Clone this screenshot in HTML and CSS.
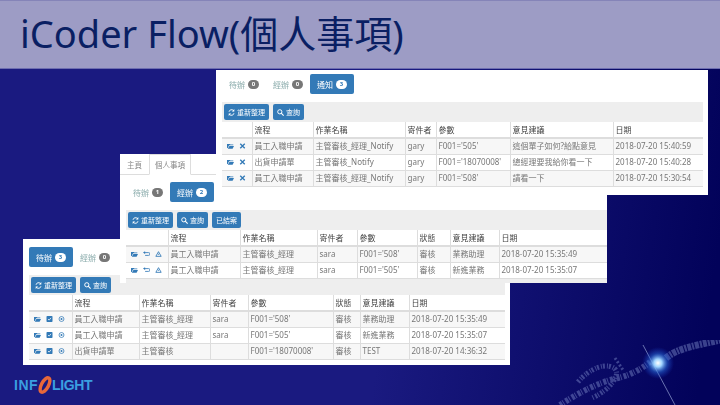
FILE: index.html
```html
<!DOCTYPE html>
<html lang="zh-Hant">
<head>
    <meta charset="UTF-8">
    <meta name="viewport" content="width=device-width, initial-scale=1.0">
    <title>iCoder Flow</title>
    <link rel="stylesheet" href="styles.css">
</head>
<body>

<svg width="0" height="0" class="defs">
    <symbol id="folder" viewBox="0 0 10 8"><path d="M0 1h4l1 1h4v1H3L1 7H0zM3.500 4H10L8 8H1z" fill="#337ab7"/></symbol>
    <symbol id="cross" viewBox="0 0 8 8"><path d="M1 1l6 6M7 1L1 7" stroke="#337ab7" stroke-width="1.800"/></symbol>
    <symbol id="undo" viewBox="0 0 10 8"><path d="M2 2h6a1.500 1.500 0 0 1 0 4H3" fill="none" stroke="#337ab7" stroke-width="1.200"/><path d="M0 2l3-2v4z" fill="#337ab7"/></symbol>
    <symbol id="warn" viewBox="0 0 10 9"><path d="M5 1l4 7H1z" fill="none" stroke="#337ab7" stroke-width="1.300"/><path d="M5 4v2" stroke="#337ab7"/></symbol>
    <symbol id="check" viewBox="0 0 8 8"><rect width="8" height="8" rx="1" fill="#337ab7"/><path d="M2 4l1.500 1.500L6 2.500" fill="none" stroke="#fff"/></symbol>
    <symbol id="ring" viewBox="0 0 8 8"><circle cx="4" cy="4" r="3.300" fill="none" stroke="#337ab7"/><circle cx="4" cy="4" r="1.300" fill="#337ab7"/></symbol>
    <symbol id="sync" viewBox="0 0 10 10"><path d="M1.500 4a3.600 3.600 0 0 1 6.500-1.500M8.500 6A3.600 3.600 0 0 1 2 7.500" fill="none" stroke="#fff" stroke-width="1.300"/><path d="M9 0v3.500H5.500zM1 10V6.500h3.500z" fill="#fff"/></symbol>
    <symbol id="search" viewBox="0 0 10 10"><circle cx="4" cy="4" r="3" fill="none" stroke="#fff" stroke-width="1.400"/><path d="M6 6l3.500 3.500" stroke="#fff" stroke-width="1.600"/></symbol>
    <radialGradient id="glow">
        <stop offset="0" stop-color="#fff"/>
        <stop offset="0.25" stop-color="#9fd4ff"/>
        <stop offset="0.6" stop-color="#2a6fe0" stop-opacity="0.5"/>
        <stop offset="1" stop-color="#1a3fd0" stop-opacity="0"/>
    </radialGradient>
</svg>

<header class="title-bar">
    <h1>iCoder Flow(個人事項)</h1>
</header>

<!-- chain and spark, bottom right of the slide -->
<svg class="spark" viewBox="0 0 240 65">
    <g class="chain" fill="none" stroke="#8f9fd8" opacity="0.4">
        <path d="M80 65C95 55 118 42 138 38C150 35 160 30 170 22" stroke-width="6" stroke-dasharray="3 1 1 2"/>
        <path d="M98 42C108 30 124 22 134 28C142 34 130 50 112 58" stroke-width="5" stroke-dasharray="2 2 1 1"/>
        <path d="M135 18l8 12" stroke-width="3" stroke-dasharray="2 2"/>
        <path d="M186 18C198 8 214 6 240 0" stroke-width="7" stroke-dasharray="4 1 2 1"/>
    </g>
    <path d="M163 5L195 65" stroke="#b8c8f0" stroke-width="0.800" opacity="0.7"/>
    <circle cx="178" cy="23" r="16" fill="url(#glow)"/>
</svg>

<section class="shot shot-three">
    <nav class="pills">
        <span class="pill active">待辦 <b>3</b></span>
        <span class="pill">經辦 <b>0</b></span>
    </nav>
    <div class="toolbar">
        <button class="btn"><svg><use href="#sync"/></svg>重新整理</button>
        <button class="btn"><svg><use href="#search"/></svg>查詢</button>
    </div>
    <table>
        <thead>
            <tr><th></th><th>流程</th><th>作業名稱</th><th>寄件者</th><th>參數</th><th>狀態</th><th>意見建議</th><th>日期</th></tr>
        </thead>
        <tbody>
            <tr>
                <td class="acts"><svg><use href="#folder"/></svg><svg><use href="#check"/></svg><svg><use href="#ring"/></svg></td>
                <td>員工入職申請</td><td>主管審核_經理</td><td>sara</td><td>F001='508'</td><td>審核</td><td>業務助理</td><td>2018-07-20 15:35:49</td>
            </tr>
            <tr>
                <td class="acts"><svg><use href="#folder"/></svg><svg><use href="#check"/></svg><svg><use href="#ring"/></svg></td>
                <td>員工入職申請</td><td>主管審核_經理</td><td>sara</td><td>F001='505'</td><td>審核</td><td>新進業務</td><td>2018-07-20 15:35:07</td>
            </tr>
            <tr>
                <td class="acts"><svg><use href="#folder"/></svg><svg><use href="#check"/></svg><svg><use href="#ring"/></svg></td>
                <td>出貨申請單</td><td>主管審核</td><td></td><td>F001='18070008'</td><td>審核</td><td>TEST</td><td>2018-07-20 14:36:32</td>
            </tr>
        </tbody>
    </table>
</section>

<section class="shot shot-two">
    <nav class="tabs">
        <span class="tab">主頁</span>
        <span class="tab open">個人事項</span>
    </nav>
    <nav class="pills">
        <span class="pill">待辦 <b>1</b></span>
        <span class="pill active">經辦 <b>2</b></span>
    </nav>
    <div class="toolbar">
        <button class="btn"><svg><use href="#sync"/></svg>重新整理</button>
        <button class="btn"><svg><use href="#search"/></svg>查詢</button>
        <button class="btn">已結案</button>
    </div>
    <table>
        <thead>
            <tr><th></th><th>流程</th><th>作業名稱</th><th>寄件者</th><th>參數</th><th>狀態</th><th>意見建議</th><th>日期</th></tr>
        </thead>
        <tbody>
            <tr>
                <td class="acts"><svg><use href="#folder"/></svg><svg><use href="#undo"/></svg><svg><use href="#warn"/></svg></td>
                <td>員工入職申請</td><td>主管審核_經理</td><td>sara</td><td>F001='508'</td><td>審核</td><td>業務助理</td><td>2018-07-20 15:35:49</td>
            </tr>
            <tr>
                <td class="acts"><svg><use href="#folder"/></svg><svg><use href="#undo"/></svg><svg><use href="#warn"/></svg></td>
                <td>員工入職申請</td><td>主管審核_經理</td><td>sara</td><td>F001='505'</td><td>審核</td><td>新進業務</td><td>2018-07-20 15:35:07</td>
            </tr>
        </tbody>
    </table>
    <div class="band"></div>
</section>

<section class="shot shot-one">
    <nav class="pills">
        <span class="pill">待辦 <b>0</b></span>
        <span class="pill">經辦 <b>0</b></span>
        <span class="pill active">通知 <b>3</b></span>
    </nav>
    <div class="toolbar">
        <button class="btn"><svg><use href="#sync"/></svg>重新整理</button>
        <button class="btn"><svg><use href="#search"/></svg>查詢</button>
    </div>
    <table>
        <thead>
            <tr><th></th><th>流程</th><th>作業名稱</th><th>寄件者</th><th>參數</th><th>意見建議</th><th>日期</th></tr>
        </thead>
        <tbody>
            <tr>
                <td class="acts"><svg><use href="#folder"/></svg><svg><use href="#cross"/></svg></td>
                <td>員工入職申請</td><td>主管審核_經理_Notify</td><td>gary</td><td>F001='505'</td><td>這個單子如何?給點意見</td><td>2018-07-20 15:40:59</td>
            </tr>
            <tr>
                <td class="acts"><svg><use href="#folder"/></svg><svg><use href="#cross"/></svg></td>
                <td>出貨申請單</td><td>主管審核_Notify</td><td>gary</td><td>F001='18070008'</td><td>總經理要我給你看一下</td><td>2018-07-20 15:40:28</td>
            </tr>
            <tr>
                <td class="acts"><svg><use href="#folder"/></svg><svg><use href="#cross"/></svg></td>
                <td>員工入職申請</td><td>主管審核_經理_Notify</td><td>gary</td><td>F001='508'</td><td>請看一下</td><td>2018-07-20 15:30:54</td>
            </tr>
        </tbody>
    </table>
    <div class="stub"><i></i><i></i></div>
</section>

<div class="logo">
    <span>INF</span>
    <svg class="logo-o" viewBox="0 0 14 20">
        <ellipse cx="7" cy="10" rx="3.500" ry="8" transform="rotate(28 7 10)" fill="none" stroke="#e8683a" stroke-width="3.400"/>
    </svg>
    <span class="logo-end">LIGHT</span>
</div>

</body>
</html>
```

FILE: styles.css
```css
* {
    margin: 0;
    padding: 0;
    box-sizing: border-box;
}

body {
    width: 720px;
    height: 405px;
    overflow: hidden;
    position: relative;
    font-family: "Noto Sans", "Noto Sans CJK TC", sans-serif;
    background: linear-gradient(98deg, #1a1a80 0%, #1a1a80 55%, #02025a 97%);
}

.defs {
    position: absolute;
}

.title-bar {
    height: 69px;
    padding: 7px 0 0 20px;
    background: #9d9cc5;
    border-top: 1px solid #8584b8;
    border-bottom: 1px solid #6d6db0;
}

.title-bar h1 {
    font-size: 38px;
    line-height: 50px;
    font-weight: 400;
    color: #0a1f63;
}

.spark {
    position: absolute;
    left: 480px;
    top: 340px;
    width: 240px;
    height: 65px;
}

.chain {
    filter: blur(0.6px);
}

/* screenshots lying on the slide */
.shot {
    position: absolute;
    background: #fff;
    font-size: 8px;
    color: #777;
    overflow: hidden;
}

.shot > * {
    filter: blur(0.35px);
}

.shot-one {
    left: 216px;
    top: 70px;
    width: 492px;
    height: 125px;
    padding: 4px 5px 0 6px;
    z-index: 3;
}

.shot-two {
    left: 120px;
    top: 154px;
    width: 487px;
    height: 129px;
    padding: 0 0 0 6px;
    z-index: 2;
}

.shot-three {
    left: 23px;
    top: 239px;
    width: 487px;
    height: 126px;
    padding: 8px 5px 0 6px;
    z-index: 1;
}

.tabs {
    display: flex;
    height: 21px;
    border-bottom: 1px solid #ddd;
    margin-left: -6px;
}

.tab {
    padding: 5px 7px 0;
    font-size: 7.500px;
    color: #888;
}

.tab.open {
    border: 1px solid #ddd;
    border-bottom: 1px solid #fff;
    height: 21px;
    padding: 4px 5px 0;
}

.pills {
    display: flex;
    height: 20px;
}

.shot-two .pills {
    margin-top: 7px;
}

.pill {
    display: flex;
    align-items: center;
    gap: 3px;
    padding: 0 7px;
    border-radius: 2px;
    color: #8aa;
}

.pill b {
    display: inline-block;
    width: 11px;
    height: 9px;
    border-radius: 5px;
    background: #777;
    color: #fff;
    font-size: 6px;
    line-height: 9px;
    text-align: center;
}

.pill.active {
    background: #337ab7;
    color: #fff;
}

.pill.active b {
    background: #fff;
    color: #337ab7;
}

.toolbar {
    display: flex;
    align-items: center;
    gap: 4px;
    height: 20px;
    margin-top: 8px;
    padding-left: 2px;
    background: #eee;
}

.btn {
    display: flex;
    align-items: center;
    gap: 2px;
    height: 16px;
    padding: 0 4px;
    border: none;
    border-radius: 2px;
    background: #337ab7;
    color: #fff;
    font-size: 7px;
    font-family: inherit;
}

.btn svg {
    width: 7px;
    height: 7px;
}

table {
    width: 100%;
    table-layout: fixed;
    border-collapse: collapse;
    background: #fff;
}

th, td {
    height: 16px;
    padding: 0 2px;
    font-size: 8px;
    line-height: 10px;
    font-weight: 400;
    text-align: left;
    white-space: nowrap;
    overflow: hidden;
    border-left: 1px solid #ddd;
    border-bottom: 1px solid #ddd;
}

th {
    color: #444;
    border-bottom-width: 2px;
}

th:first-child, td:first-child {
    border-left: none;
}

tbody tr:nth-child(odd) {
    background: #f7f7f7;
}

.acts {
    padding-left: 5px;
}

.acts svg {
    width: 7px;
    height: 6px;
    margin-right: 5px;
}

.band {
    height: 8px;
    background: #eee;
}

.stub {
    display: flex;
    gap: 6px;
    margin: 8px 0 0 3px;
}

.stub i {
    width: 6px;
    height: 1px;
    background: #555;
}

.shot-one th:nth-child(1) { width: 30px; }
.shot-one th:nth-child(2) { width: 61px; }
.shot-one th:nth-child(3) { width: 92px; }
.shot-one th:nth-child(4) { width: 31px; }
.shot-one th:nth-child(5) { width: 74px; }
.shot-one th:nth-child(6) { width: 103px; }

.shot-two table,
.shot-two .toolbar {
    width: 481px;
}

.shot-two th:nth-child(1) { width: 42px; }
.shot-two th:nth-child(2) { width: 72px; }
.shot-two th:nth-child(3) { width: 77px; }
.shot-two th:nth-child(4) { width: 40px; }
.shot-two th:nth-child(5) { width: 60px; }
.shot-two th:nth-child(6) { width: 33px; }
.shot-two th:nth-child(7) { width: 49px; }

.shot-three th:nth-child(1) { width: 43px; }
.shot-three th:nth-child(2) { width: 67px; }
.shot-three th:nth-child(3) { width: 71px; }
.shot-three th:nth-child(4) { width: 38px; }
.shot-three th:nth-child(5) { width: 85px; }
.shot-three th:nth-child(6) { width: 27px; }
.shot-three th:nth-child(7) { width: 49px; }

.logo {
    position: absolute;
    left: 14px;
    top: 375px;
    display: flex;
    align-items: center;
    font-family: "Liberation Sans", sans-serif;
    font-weight: 700;
    font-size: 14px;
    letter-spacing: 0.5px;
    color: #3a9fe0;
}

.logo-o {
    width: 14px;
    height: 20px;
}

.logo-end {
    letter-spacing: -0.4px;
}
```
